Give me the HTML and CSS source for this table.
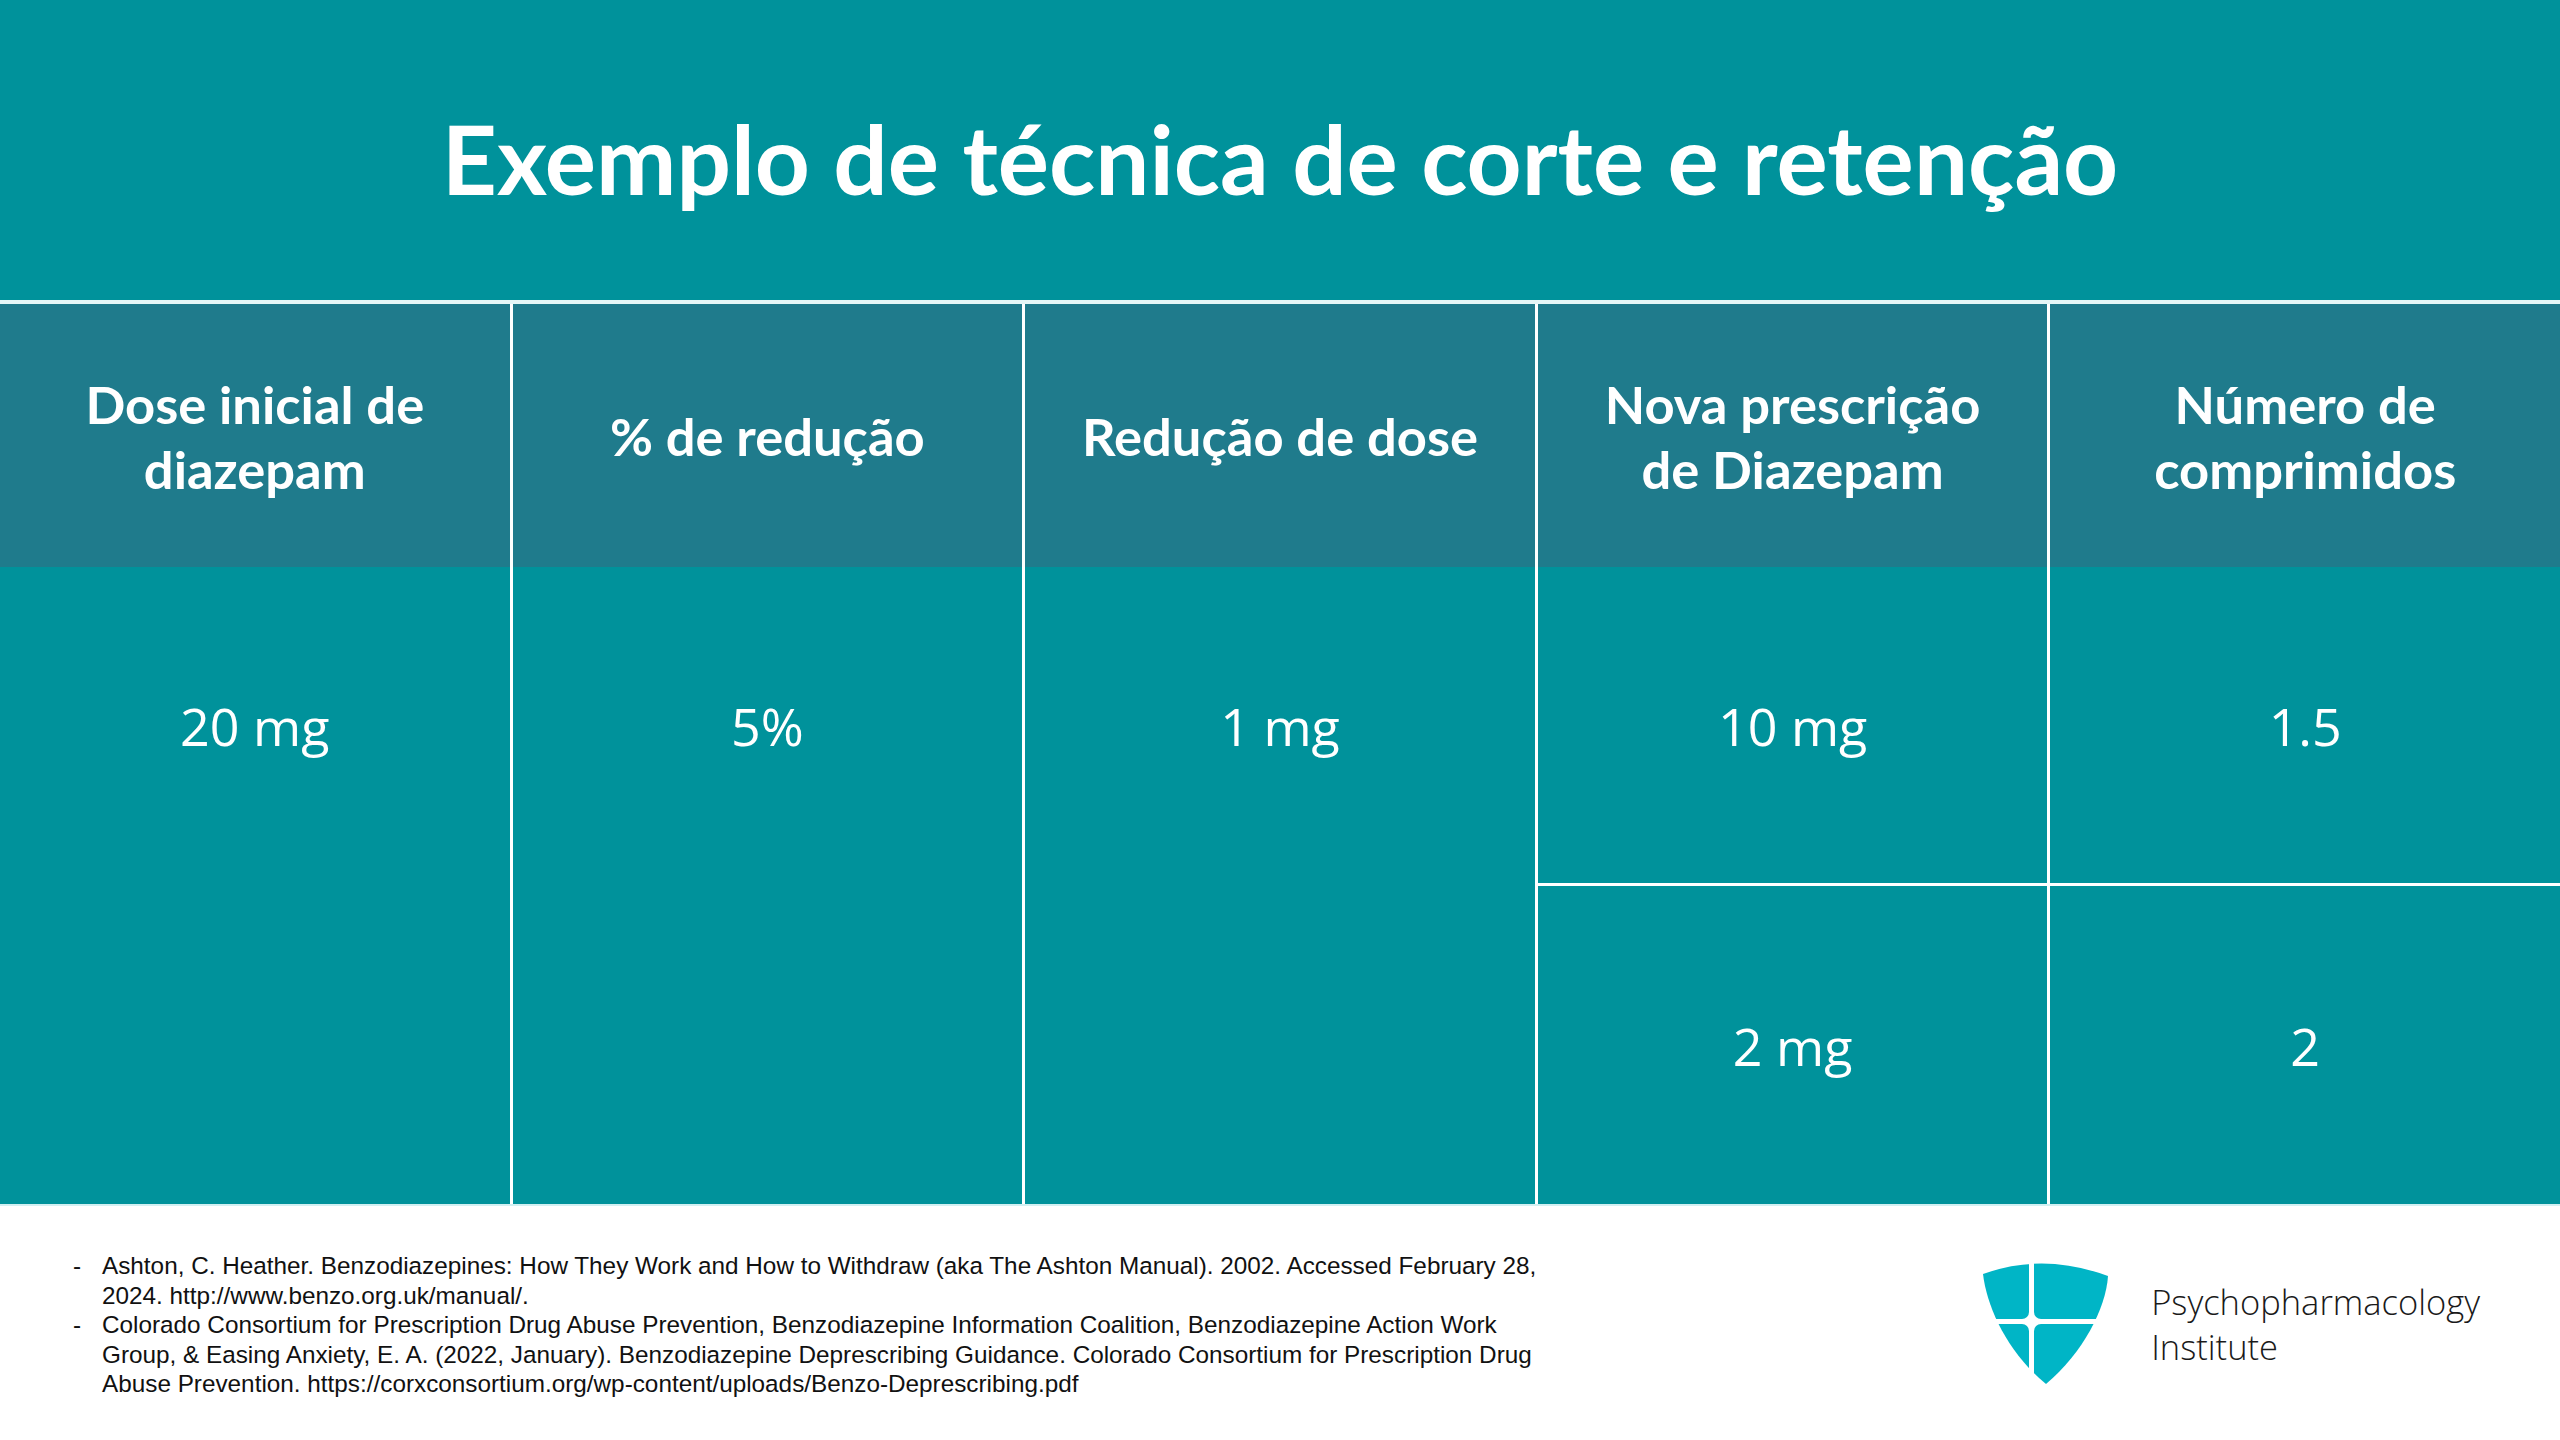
FILE: index.html
```html
<!DOCTYPE html>
<html lang="pt">
<head>
<meta charset="utf-8">
<title>Exemplo de técnica de corte e retenção</title>
<link rel="stylesheet" href="styles.css">
</head>
<body>
<div class="slide">
  <header class="title-band">
    <h1 class="title">Exemplo de técnica de corte e retenção</h1>
  </header>

  <div class="table">
    <div class="th">Dose inicial de<br>diazepam</div>
    <div class="th">% de redução</div>
    <div class="th">Redução de dose</div>
    <div class="th">Nova prescrição<br>de Diazepam</div>
    <div class="th">Número de<br>comprimidos</div>

    <div class="td span"><div class="val">20 mg</div></div>
    <div class="td span"><div class="val">5%</div></div>
    <div class="td span"><div class="val">1 mg</div></div>
    <div class="td"><div class="val">10 mg</div></div>
    <div class="td"><div class="val">1.5</div></div>
    <div class="td second"><div class="val">2 mg</div></div>
    <div class="td second"><div class="val">2</div></div>
  </div>

  <footer class="footer">
    <ul class="refs">
      <li>Ashton, C. Heather. Benzodiazepines: How They Work and How to Withdraw (aka The Ashton Manual). 2002. Accessed February 28,<br>2024. http://www.benzo.org.uk/manual/.</li>
      <li>Colorado Consortium for Prescription Drug Abuse Prevention, Benzodiazepine Information Coalition, Benzodiazepine Action Work<br>Group, &amp; Easing Anxiety, E. A. (2022, January). Benzodiazepine Deprescribing Guidance. Colorado Consortium for Prescription Drug<br>Abuse Prevention. https://corxconsortium.org/wp-content/uploads/Benzo-Deprescribing.pdf</li>
    </ul>
    <div class="logo">
      <svg class="shield" viewBox="0 0 126 122" width="126" height="122" aria-hidden="true">
        <defs>
          <clipPath id="shieldClip">
            <path d="M0,11 Q60,-11 125,13 C123,45 100,90 63,121 C25,90 4,45 0,11 Z"/>
          </clipPath>
        </defs>
        <g clip-path="url(#shieldClip)" fill="#00b5c6">
          <rect x="-20" y="-20" width="66" height="76" rx="7"/>
          <rect x="51" y="-20" width="95" height="76" rx="7"/>
          <rect x="-20" y="61" width="66" height="80" rx="7"/>
          <rect x="51" y="61" width="95" height="80" rx="7"/>
        </g>
      </svg>
      <div class="logo-text">Psychopharmacology<br>Institute</div>
    </div>
  </footer>
</div>
</body>
</html>
```

FILE: styles.css
```css
html, body {
  margin: 0;
  padding: 0;
  background: #ffffff;
}

.slide {
  width: 2560px;
  height: 1440px;
  display: flex;
  flex-direction: column;
  overflow: hidden;
}

.title-band {
  height: 300px;
  background: #00929b;
  display: flex;
  align-items: center;
  justify-content: center;
  border-bottom: 4px solid #e4f6f7;
}

.title {
  margin: 0;
  padding-top: 14px;
  color: #ffffff;
  font-family: "Lato", "Open Sans", sans-serif;
  font-weight: 700;
  font-size: 96px;
  letter-spacing: 0;
}

.table {
  display: grid;
  grid-template-columns: repeat(5, 1fr);
  grid-template-rows: 263px 316px 321px;
  column-gap: 3px;
  row-gap: 0;
  background: #ffffff;
  border-bottom: 2px solid #d2f0f2;
}

.th {
  background: #1f7b8c;
  color: #ffffff;
  font-family: "Lato", "Open Sans", sans-serif;
  font-weight: 700;
  font-size: 52.5px;
  line-height: 65px;
  text-align: center;
  display: flex;
  align-items: center;
  justify-content: center;
}

.td {
  background: #00929b;
  color: #ffffff;
  font-family: "Open Sans", "Noto Sans", sans-serif;
  font-weight: 400;
  font-size: 52px;
  display: flex;
  flex-direction: column;
  box-sizing: border-box;
}

.td.span {
  grid-row: span 2;
}

.td.second {
  border-top: 3px solid #ffffff;
}

.val {
  height: 316px;
  display: flex;
  align-items: center;
  justify-content: center;
}

.td.second .val {
  height: 100%;
}

.footer {
  flex: 1;
  display: flex;
  align-items: center;
  justify-content: space-between;
  padding: 0 80px 0 73px;
}

.refs {
  list-style: none;
  margin: 4px 0 0 0;
  padding: 0;
  font-family: "Liberation Sans", Arial, sans-serif;
  font-size: 24.3px;
  line-height: 29.4px;
  color: #111111;
}

.refs li {
  position: relative;
  padding-left: 29px;
}

.refs li::before {
  content: "-";
  position: absolute;
  left: 0;
  top: 0;
}

.logo {
  display: flex;
  align-items: center;
  gap: 42px;
  margin-top: 2px;
}

.shield {
  display: block;
}

.logo-text {
  font-family: "Open Sans", "Noto Sans", sans-serif;
  font-weight: 300;
  font-size: 34.5px;
  line-height: 45px;
  color: #1a1a1a;
}
```
